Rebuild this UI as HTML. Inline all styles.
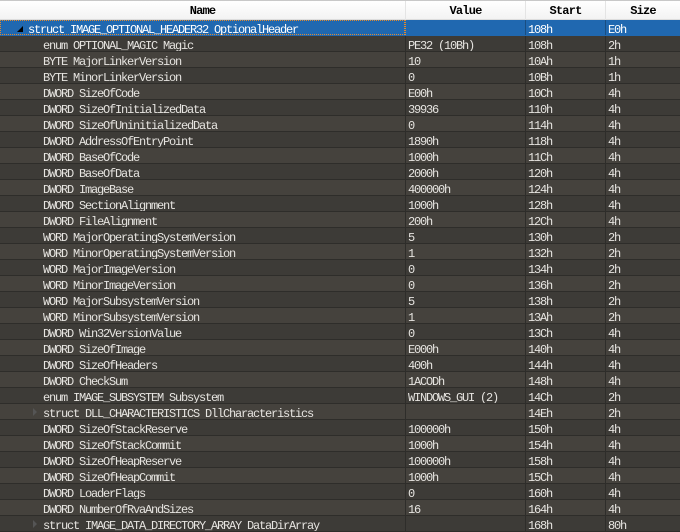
<!DOCTYPE html>
<html><head><meta charset="utf-8"><style>
*{margin:0;padding:0;box-sizing:border-box}
body{width:680px;height:529px;overflow:hidden;background:#3d3b37;font-family:"Liberation Mono","Noto Sans CJK SC",monospace;font-size:12px;letter-spacing:-1.2px;color:#e6e4e0}
.hdr{position:absolute;left:0;top:0;width:680px;height:20px;background:linear-gradient(#fff,#f3f3f3);border-top:1px solid #c8c8c8;border-bottom:1px solid #ddd;color:#000;font-weight:bold;letter-spacing:-0.8px}
.hdr div{position:absolute;top:0;height:19px;line-height:21px;text-align:center;border-left:1px solid #e4e4e4}
.row{position:absolute;left:0;width:680px;height:16px;line-height:20px;border-bottom:1px solid #2e2d2a;white-space:pre;overflow:hidden}
.row:nth-child(odd){background:#45423d}
.row span{position:absolute;top:0;height:15px}
.c1{left:0;width:405px}.c2{left:405px;width:120px;border-left:1px solid #2e2d2a;padding-left:2px}.c3{left:525px;width:80px;border-left:1px solid #2e2d2a;padding-left:2px}.c4{left:605px;width:75px;border-left:1px solid #2e2d2a;padding-left:2px}
.sel{background:#2068b0 !important;color:#fff;border-bottom:1px solid #2068b0}
.sel .c1{outline:1px dotted #e08a30;outline-offset:-1px}
.sel .c2{border-left:1px dotted #e08a30}
.sel .c3,.sel .c4{border-left:1px solid #1a4d80}
.arr{position:absolute;left:33px;top:4px !important;width:0;height:0 !important;border-top:4px solid transparent;border-bottom:4px solid transparent;border-left:4px solid #555}
</style></head><body>
<div class="hdr"><div style="left:0;width:405px;border:0">Name</div><div style="left:405px;width:120px">Value</div><div style="left:525px;width:80px">Start</div><div style="left:605px;width:75px">Size</div></div>
<div id="rows" style="position:absolute;left:0;top:20px;width:680px">
<div class="row sel" style="top:0"><span class="c1"><span style="left:17px;top:6px;position:absolute;width:0;height:0;border-left:6px solid transparent;border-bottom:6px solid #000"></span><span style="left:28px">struct IMAGE_OPTIONAL_HEADER32 OptionalHeader</span></span><span class="c2"></span><span class="c3">108h</span><span class="c4">E0h</span></div>
</div>
<script>
var d=[["enum OPTIONAL_MAGIC Magic","PE32 (10Bh)","108h","2h"],["BYTE MajorLinkerVersion","10","10Ah","1h"],["BYTE MinorLinkerVersion","0","10Bh","1h"],["DWORD SizeOfCode","E00h","10Ch","4h"],["DWORD SizeOfInitializedData","39936","110h","4h"],["DWORD SizeOfUninitializedData","0","114h","4h"],["DWORD AddressOfEntryPoint","1890h","118h","4h"],["DWORD BaseOfCode","1000h","11Ch","4h"],["DWORD BaseOfData","2000h","120h","4h"],["DWORD ImageBase","400000h","124h","4h"],["DWORD SectionAlignment","1000h","128h","4h"],["DWORD FileAlignment","200h","12Ch","4h"],["WORD MajorOperatingSystemVersion","5","130h","2h"],["WORD MinorOperatingSystemVersion","1","132h","2h"],["WORD MajorImageVersion","0","134h","2h"],["WORD MinorImageVersion","0","136h","2h"],["WORD MajorSubsystemVersion","5","138h","2h"],["WORD MinorSubsystemVersion","1","13Ah","2h"],["DWORD Win32VersionValue","0","13Ch","4h"],["DWORD SizeOfImage","E000h","140h","4h"],["DWORD SizeOfHeaders","400h","144h","4h"],["DWORD CheckSum","1ACODh","148h","4h"],["enum IMAGE_SUBSYSTEM Subsystem","WINDOWS_GUI (2)","14Ch","2h"],["*struct DLL_CHARACTERISTICS DllCharacteristics","","14Eh","2h"],["DWORD SizeOfStackReserve","100000h","150h","4h"],["DWORD SizeOfStackCommit","1000h","154h","4h"],["DWORD SizeOfHeapReserve","100000h","158h","4h"],["DWORD SizeOfHeapCommit","1000h","15Ch","4h"],["DWORD LoaderFlags","0","160h","4h"],["DWORD NumberOfRvaAndSizes","16","164h","4h"],["*struct IMAGE_DATA_DIRECTORY_ARRAY DataDirArray","","168h","80h"]];
var h="";d.forEach(function(r,i){var n=r[0],a="";if(n[0]=="*"){n=n.slice(1);a='<span class="arr"></span>';}
h+='<div class="row" style="top:'+(16*(i+1))+'px"><span class="c1">'+a+'<span style="left:43px">'+n+'</span></span><span class="c2">'+r[1]+'</span><span class="c3">'+r[2]+'</span><span class="c4">'+r[3]+'</span></div>';});
document.getElementById("rows").insertAdjacentHTML("beforeend",h);
</script>
</body></html>
